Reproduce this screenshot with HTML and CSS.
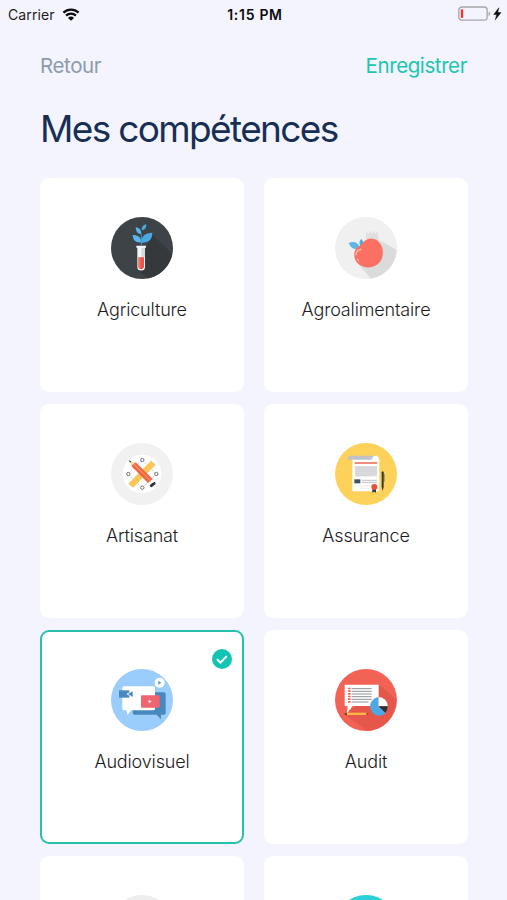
FILE: index.html
```html
<!DOCTYPE html>
<html lang="fr">
<head>
    <meta charset="utf-8">
    <title>Mes compétences</title>
    <link rel="stylesheet" href="styles.css">
</head>
<body>
    <div class="status-bar">
        <div class="carrier">
            <span>Carrier</span>
            <svg class="wifi" viewBox="0 0 18 13">
                <path d="M1.4 4.6a11 11 0 0 1 15.2 0M4.1 7.6a7 7 0 0 1 9.8 0" fill="none" stroke="#0b0b0f" stroke-width="2.3"/>
                <path d="M9 12.8L6 9.9a4.3 4.3 0 0 1 6 0z" fill="#0b0b0f"/>
            </svg>
        </div>
        <div class="time">1:15 PM</div>
        <div class="battery">
            <svg viewBox="0 0 44 16">
                <rect x="0.8" y="1" width="28.4" height="13.2" rx="3.2" fill="none" stroke="#a6a6aa" stroke-width="1.3"/>
                <path d="M30.6 5.4c2 .8 2 3.8 0 4.6z" fill="#a6a6aa"/>
                <rect x="2.8" y="3.2" width="2.4" height="8.8" rx=".8" fill="#f5382f"/>
                <path d="M40.8 1.8L35.8 8.600h3l-1.500 5.200 5.700-7.200h-3.300z" fill="#0b0b0f" stroke="#0b0b0f" stroke-width=".5"/>
            </svg>
        </div>
    </div>

    <div class="nav">
        <a class="back">Retour</a>
        <a class="save">Enregistrer</a>
    </div>

    <h1>Mes compétences</h1>

    <div class="grid">
        <div class="card">
            <svg class="icon" viewBox="27 26 186 186">
                <circle cx="120" cy="119" r="93" fill="#3d4347"/>
                <path d="M149 76l62 61a93 93 0 0 1-73 73l-30-25z" fill="#35393c"/>
                <path d="M118 110V78" stroke="#3f9fd6" stroke-width="3"/>
                <path d="M117 102c-16 2-24-6-25-22 16 0 26 7 25 22z" fill="#57b7ea"/>
                <path d="M118 103c-1-20 12-30 33-30 0 20-11 31-33 30z" fill="#4aa9e2"/>
                <path d="M118 77c-10 1-16-5-17-20 11 2 17 8 17 20z" fill="#57b7ea"/>
                <path d="M119 66c0-11 4-16 14-18 0 11-4 17-14 18z" fill="#4aa9e2"/>
                <path d="M103 112h29v6h-3v57a11.500 11.500 0 0 1-23 0v-57h-3z" fill="#f3f5f6"/>
                <path d="M118 118h11v29h-11z" fill="#d3dbe0"/>
                <path d="M109 147h17v27a8.500 8.500 0 0 1-17 0z" fill="#e9544b"/>
                <path d="M109 147h6v33c-4-1-6-4-6-7z" fill="#f47a70"/>
            </svg>
            <span class="label">Agriculture</span>
        </div>

        <div class="card">
            <svg class="icon" viewBox="27 26 186 186">
                <circle cx="120" cy="119" r="93" fill="#f0f0f0"/>
                <path d="M165 98l47 27a93 93 0 0 1-77 86l-36-42z" fill="#dbdbdb"/>
                <path d="M119 92l2-22 6 7 5-10 5 11 6-11 5 11 6-10 5 30z" fill="#dfdfdf"/>
                <path d="M103 123c-20 2-29-4-35-19 16-7 30-3 35 19z" fill="#5bb9ea"/>
                <path d="M104 115c-6-10-4-18 2-23 8 8 8 16-2 23z" fill="#4fa9df"/>
                <path d="M112 102c12-14 32-15 46-2 16 16 17 44 3 62-14 18-42 19-60 8-20-12-22-46-4-55 6-3 11-8 15-13z" fill="#fb7062"/>
                <path d="M90 139c1-9 6-14 14-16" fill="none" stroke="#fdb0a6" stroke-width="5" stroke-linecap="round"/>
                <path d="M94 152l4 6" stroke="#fdb0a6" stroke-width="4" stroke-linecap="round"/>
            </svg>
            <span class="label">Agroalimentaire</span>
        </div>

        <div class="card">
            <svg class="icon" viewBox="27 26 186 186">
                <circle cx="120" cy="119" r="93" fill="#f1f1f1"/>
                <circle cx="120" cy="119" r="58" fill="#ffffff"/>
                <path d="M120 77l43 42-43 42-42-42z" fill="none" stroke="#9a9a9a" stroke-width="1.500" stroke-dasharray="7 3"/>
                <path d="M147 79l14 12-68 69-14-12z" fill="#f9c658"/>
                <path d="M138 91l8 8M130 99l5 5M108 121l6 6M100 129l8 8M93 136l5 5" stroke="#f0b548" stroke-width="2"/>
                <g fill="#ffffff" stroke="#70757a" stroke-width="3">
                    <circle cx="121" cy="77" r="5"/>
                    <circle cx="163" cy="119" r="5"/>
                    <circle cx="121" cy="160" r="5"/>
                    <circle cx="79" cy="119" r="5"/>
                </g>
                <path d="M82 79l17 6-10 11z" fill="#f8dcae"/>
                <path d="M81 78l7 3-4 4z" fill="#35383b"/>
                <path d="M101 84l51 50-14 12-50-51z" fill="#ee6542"/>
                <path d="M96 90l50 50" stroke="#f98b63" stroke-width="4"/>
                <path d="M143 153q8-9 16-11l2 7-12 10q-5 0-6-6z" fill="#303336"/>
            </svg>
            <span class="label">Artisanat</span>
        </div>

        <div class="card">
            <svg class="icon" viewBox="27 26 186 186">
                <circle cx="120" cy="119" r="93" fill="#fdd25b"/>
                <path d="M79 68h72c6 0 9 4 9 10v93H79z" fill="#fdfdfc"/>
                <path d="M63 76c2-8 5-12 11-12h75c-7 1-9 5-12 12z" fill="#bfc3c8"/>
                <path d="M137 76c2-8 6-12 12-12 6 0 9 3 10 12z" fill="#ffffff"/>
                <path d="M86 86h68" stroke="#ee7564" stroke-width="5"/>
                <path d="M87 95h66v31H87z" fill="#dcdde1"/>
                <path d="M87 100h66M87 106h66M87 112h66M87 118h66M87 124h44" stroke="#c8cad0" stroke-width="1.500"/>
                <path d="M85 135h18v12H85z" fill="#405163"/>
                <path d="M107 138h46M107 144h46" stroke="#bfc3c8" stroke-width="3"/>
                <path d="M104 162h24M86 155h48" stroke="#e3e4e6" stroke-width="2"/>
                <path d="M139 162h11v13l-5.500-3-5.500 3z" fill="#37383d"/>
                <circle cx="145" cy="158" r="9" fill="#e84f3c"/>
                <path d="M167 114q3-7 6 0v44l-3 12-3-12z" fill="#34383d"/>
                <path d="M174 119v23" stroke="#34383d" stroke-width="2"/>
            </svg>
            <span class="label">Assurance</span>
        </div>

        <div class="card selected">
            <svg class="check" viewBox="0 0 20 20">
                <circle cx="10" cy="10" r="10" fill="#14c4b3"/>
                <path d="M5 10.300l3.400 3.300 6.400-6.500" fill="none" stroke="#ffffff" stroke-width="2"/>
            </svg>
            <svg class="icon" viewBox="27 26 186 186">
                <circle cx="120" cy="119" r="93" fill="#9acdfb"/>
                <path d="M94 96h92q5 0 5 5v57q0 5-5 5h-9v14l-13-14H98q-6 0-6-6z" fill="#4888bf"/>
                <path d="M66 78h88q5 0 5 5v62q0 5-5 5H87l-10 15-4-15h-7q-5 0-5-5V83q0-5 5-5z" fill="#ffffff"/>
                <path d="M51 90h31v22H51z" fill="#4888bf"/>
                <path d="M79 101l13-8v17z" fill="#4888bf"/>
                <path d="M74 101l6-5v10z" fill="#ffffff"/>
                <rect x="117" y="105" width="56" height="37" rx="3" fill="#ef6470"/>
                <path d="M140 118l9 5.500-9 5.500z" fill="#ffffff"/>
                <circle cx="173" cy="67" r="15" fill="#ffffff"/>
                <path d="M169 61l9 6-9 6z" fill="#5c91c2"/>
            </svg>
            <span class="label">Audiovisuel</span>
        </div>

        <div class="card">
            <svg class="icon" viewBox="27 26 186 186">
                <circle cx="120" cy="119" r="93" fill="#f26355"/>
                <path d="M158 72l52 45a93 93 0 0 1-84 95l-68-47z" fill="#e5574a"/>
                <path d="M56 73h102v64H80l-17 22 2-22h-9z" fill="#ffffff"/>
                <path d="M77 85h60M77 93h60M77 101h60M77 109h60M77 117h60M77 125h50" stroke="#777c80" stroke-width="2.500"/>
                <path d="M70 82v46" stroke="#ef6a5b" stroke-width="8" stroke-dasharray="5 3"/>
                <path d="M62 157h64v7H62z" fill="#f8b648"/>
                <path d="M62 157l-8 4 8 4z" fill="#37383a"/>
                <path d="M121 157h6v7h-6z" fill="#c14238"/>
                <path d="M158 138V110a28 28 0 1 0 21 49z" fill="#4baae4"/>
                <path d="M158 138V110a27 27 0 0 1 27 28z" fill="#ffffff"/>
                <path d="M158 138h27q0 12-7 19z" fill="#2b3237"/>
            </svg>
            <span class="label">Audit</span>
        </div>

        <div class="card">
            <svg class="icon" viewBox="27 26 186 186">
                <circle cx="120" cy="119" r="93" fill="#eeeeee"/>
            </svg>
        </div>

        <div class="card">
            <svg class="icon" viewBox="27 26 186 186">
                <circle cx="120" cy="119" r="93" fill="#2bd0d8"/>
            </svg>
        </div>
    </div>
</body>
</html>
```

FILE: styles.css
```css
* {
    box-sizing: border-box;
}

body {
    margin: 0;
    height: 900px;
    overflow: hidden;
    background: #f3f4fd;
    font-family: Inter, "Liberation Sans", sans-serif;
    color: #1c1c1e;
}

.status-bar {
    display: grid;
    grid-template-columns: 1fr auto 1fr;
    align-items: center;
    height: 28px;
    padding: 0 5px 0 8px;
    font-size: 14px;
}

.carrier {
    display: flex;
    align-items: center;
    gap: 7px;
}

.carrier span {
    letter-spacing: 0.1px;
}

.wifi {
    width: 18px;
    height: 13px;
}

.time {
    font-weight: 600;
    letter-spacing: 0.7px;
    color: #0b0b0f;
}

.battery {
    display: flex;
    justify-content: flex-end;
}

.battery svg {
    width: 44px;
    height: 16px;
}

.nav {
    display: flex;
    justify-content: space-between;
    padding: 0 40px;
    margin-top: 25px;
    font-size: 20.5px;
    line-height: 26px;
    letter-spacing: -0.4px;
}

.back {
    color: #8c9bab;
}

.save {
    color: #1ac6b0;
}

h1 {
    margin: 26px 40px 0;
    font-size: 37px;
    line-height: 48px;
    font-weight: 400;
    letter-spacing: -1.65px;
    color: #182f55;
}

.grid {
    display: grid;
    grid-template-columns: 204px 204px;
    grid-auto-rows: 214px;
    gap: 12px 20px;
    padding: 0 40px;
    margin-top: 25px;
}

.card {
    position: relative;
    display: flex;
    flex-direction: column;
    align-items: center;
    padding-top: 39px;
    background: #ffffff;
    border-radius: 9px;
}

.selected {
    box-shadow: inset 0 0 0 2px #27bfae;
}

.icon {
    width: 62px;
    height: 62px;
}

.label {
    margin-top: 19px;
    font-size: 18px;
    line-height: 24px;
    font-weight: 300;
    letter-spacing: -0.15px;
}

/* tick in the corner of a chosen card */
.check {
    position: absolute;
    top: 19px;
    right: 12px;
    width: 20px;
    height: 20px;
}
```
